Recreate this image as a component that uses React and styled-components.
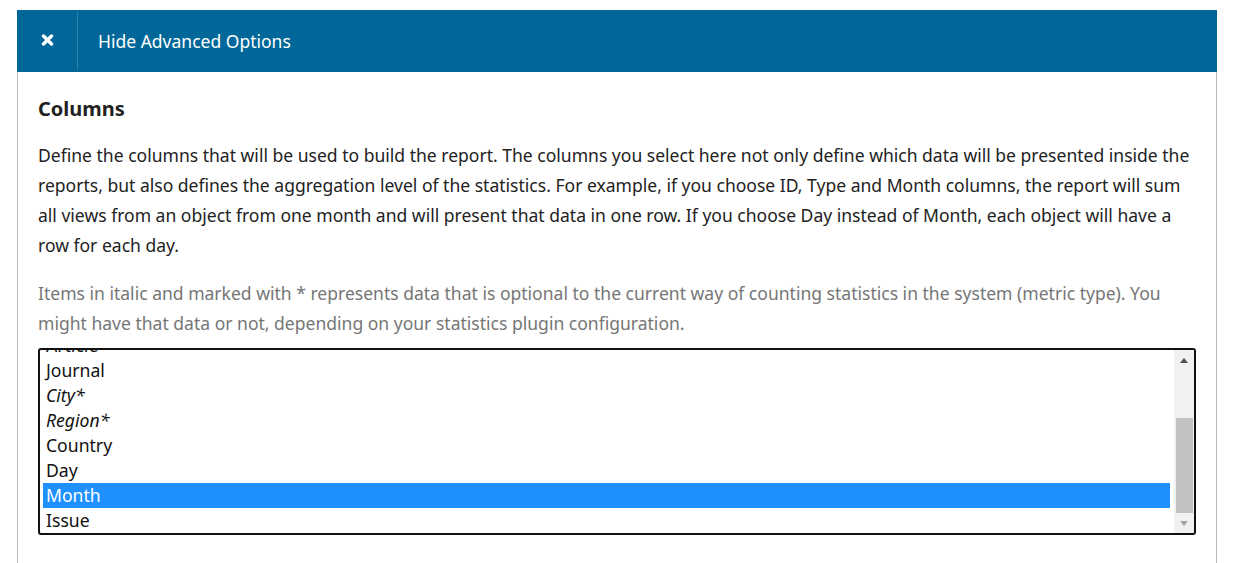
import React from "react";
import styled, { createGlobalStyle } from "styled-components";

const GlobalStyle = createGlobalStyle`
  html, body {
    margin: 0;
    padding: 0;
    background: #fff;
  }
  body {
    font-family: "Noto Sans", "Liberation Sans", sans-serif;
    color: #222;
  }
`;

const Panel = styled.section`
  width: 1200px;
  margin: 10px 0 0 17px;
`;

const Header = styled.div`
  display: flex;
  align-items: stretch;
  height: 62px;
  background-color: #006798;
  color: #fff;
`;

const CloseButton = styled.button`
  width: 61px;
  margin: 1px 0 2px;
  padding: 0 0 1px;
  border: none;
  border-right: 1px solid #2b80a8;
  background: transparent;
  color: #fff;
  display: flex;
  align-items: center;
  justify-content: center;
  cursor: pointer;
`;

const HeaderTitle = styled.span`
  display: flex;
  align-items: center;
  padding-left: 20px;
  font-size: 17.5px;
`;

const Body = styled.div`
  border-left: 1px solid #bbb;
  border-right: 1px solid #bbb;
  padding: 20px 20px 40px;
`;

const Heading = styled.h3`
  margin: 0 0 16px;
  padding-top: 2px;
  font-size: 20px;
  line-height: 30px;
  font-weight: 700;
  color: #222;
`;

const Text = styled.p`
  margin: 0 0 18px;
  font-size: 17.55px;
  line-height: 30px;
  color: ${(p) => (p.muted ? "#767676" : "#222")};
`;

const ListBox = styled.div`
  display: flex;
  height: 183px;
  margin-top: -8px;
  border: 2px solid #111;
  border-radius: 3px;
  overflow: hidden;
`;

const Options = styled.div`
  flex: 1;
  overflow: hidden;
  padding: 0 4px 0 3px;
`;

const OptionList = styled.ul`
  list-style: none;
  margin: -17px 0 0;
  padding: 0;
`;

const Option = styled.li`
  height: 25px;
  padding: 0 3px;
  font-size: 17.6px;
  line-height: 25px;
  font-style: ${(p) => (p.optional ? "italic" : "normal")};
  color: ${(p) => (p.selected ? "#fff" : "#111")};
  background: ${(p) => (p.selected ? "#1e90ff" : "transparent")};
`;

const Scrollbar = styled.div`
  width: 20px;
  display: flex;
  flex-direction: column;
  background: #f1f1f1;
`;

const ArrowButton = styled.div`
  height: 20px;
  display: flex;
  align-items: center;
  justify-content: center;
`;

const Track = styled.div`
  flex: 1;
  display: flex;
  flex-direction: column;
  justify-content: flex-end;
`;

const Thumb = styled.div`
  height: 95px;
  margin: 0 1px 0 2px;
  background: #c1c1c1;
`;

const columns = [
  { label: "Article" },
  { label: "Journal" },
  { label: "City*", optional: true },
  { label: "Region*", optional: true },
  { label: "Country" },
  { label: "Day" },
  { label: "Month", selected: true },
  { label: "Issue" },
];

const App = () => {
  return (
    <>
      <GlobalStyle />
      <Panel>
        <Header>
          <CloseButton aria-label="Hide">
            <svg width="13" height="12" viewBox="0 0 13 12">
              <path
                d="M2.5 2 L10.5 10 M10.5 2 L2.5 10"
                stroke="#fff"
                strokeWidth="3.4"
                strokeLinecap="round"
              />
            </svg>
          </CloseButton>
          <HeaderTitle>Hide Advanced Options</HeaderTitle>
        </Header>
        <Body>
          <Heading>Columns</Heading>
          <Text>
            Define the columns that will be used to build the report. The columns you select here not only
            define which data will be presented inside the reports, but also defines the aggregation level of
            the statistics. For example, if you choose ID, Type and Month columns, the report will sum all
            views from an object from one month and will present that data in one row. If you choose Day
            instead of Month, each object will have a row for each day.
          </Text>
          <Text muted>
            Items in italic and marked with * represents data that is optional to the current way of counting
            statistics in the system (metric type). You might have that data or not, depending on your
            statistics plugin configuration.
          </Text>
          <ListBox role="listbox" aria-multiselectable="true">
            <Options>
              <OptionList>
                {columns.map((c) => (
                  <Option key={c.label} optional={c.optional} selected={c.selected}>
                    {c.label}
                  </Option>
                ))}
              </OptionList>
            </Options>
            <Scrollbar>
              <ArrowButton>
                <svg width="8" height="5" viewBox="0 0 8 5">
                  <path d="M0 5 L4 0 L8 5 Z" fill="#505050" />
                </svg>
              </ArrowButton>
              <Track>
                <Thumb />
              </Track>
              <ArrowButton>
                <svg width="8" height="5" viewBox="0 0 8 5">
                  <path d="M0 0 L8 0 L4 5 Z" fill="#a3a3a3" />
                </svg>
              </ArrowButton>
            </Scrollbar>
          </ListBox>
        </Body>
      </Panel>
    </>
  );
};

export default App;
